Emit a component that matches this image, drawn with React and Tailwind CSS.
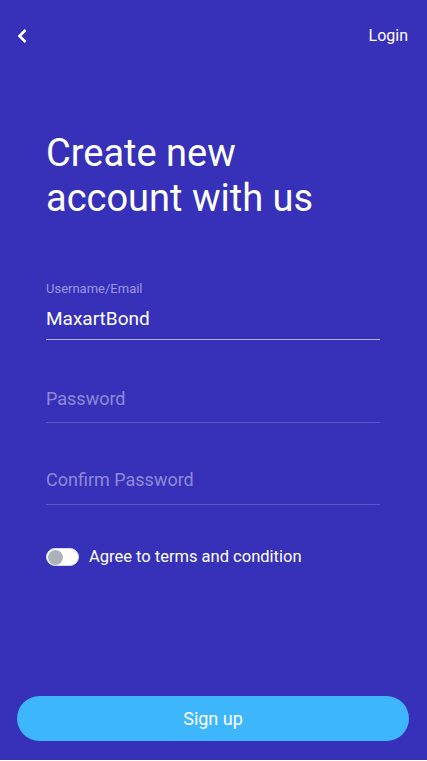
import React from "react";

export default function App() {
  return (
    <div
      className="w-full h-[760px] bg-[#3730b8] flex flex-col text-white"
      style={{ fontFamily: "Roboto, 'Noto Sans', sans-serif" }}
    >
      <div className="mt-[24px] h-[24px] flex items-center justify-between pl-[16px] pr-[19px]">
        <svg width="12" height="16" viewBox="0 0 12 16" className="block">
          <polyline
            points="9.5,2 3.5,8 9.5,14"
            fill="none"
            stroke="white"
            strokeWidth="2.6"
            strokeLinecap="butt"
            strokeLinejoin="miter"
          />
        </svg>
        <span className="text-[16px] leading-[24px]">Login</span>
      </div>

      <h1 className="mt-[83px] ml-[46px] text-[38px] leading-[45px] font-normal">
        Create new
        <br />
        account with us
      </h1>

      <div className="ml-[46px] mr-[47px] mt-[60px] flex flex-col">
        <div className="flex flex-col border-b border-[#b7b4ea] pb-[8px]">
          <span className="text-[13px] leading-[16px] text-[#9c98e0]">Username/Email</span>
          <span className="mt-[10px] text-[19px] leading-[24px] text-white">MaxartBond</span>
        </div>
        <div className="mt-[47px] border-b border-[#5a53c9] pb-[11px]">
          <span className="block text-[18px] leading-[24px] text-[#8f8ad8]">Password</span>
        </div>
        <div className="mt-[45px] border-b border-[#5a53c9] pb-[12px]">
          <span className="block text-[18px] leading-[24px] text-[#8f8ad8]">Confirm Password</span>
        </div>
        <div className="mt-[42px] flex items-center gap-[10px]">
          <div className="w-[33px] h-[18px] rounded-full bg-white border border-[#d9d9e3] flex items-center px-[1px]">
            <div className="w-[15px] h-[15px] rounded-full bg-[#adb2ba]" />
          </div>
          <span className="text-[16.5px] leading-[20px] text-white">Agree to terms and condition</span>
        </div>
      </div>

      <div className="flex-1" />

      <button className="ml-[17px] mr-[18px] mb-[19px] h-[45px] rounded-full bg-[#3db6fe] text-white text-[18px] flex items-center justify-center">
        Sign up
      </button>
    </div>
  );
}
